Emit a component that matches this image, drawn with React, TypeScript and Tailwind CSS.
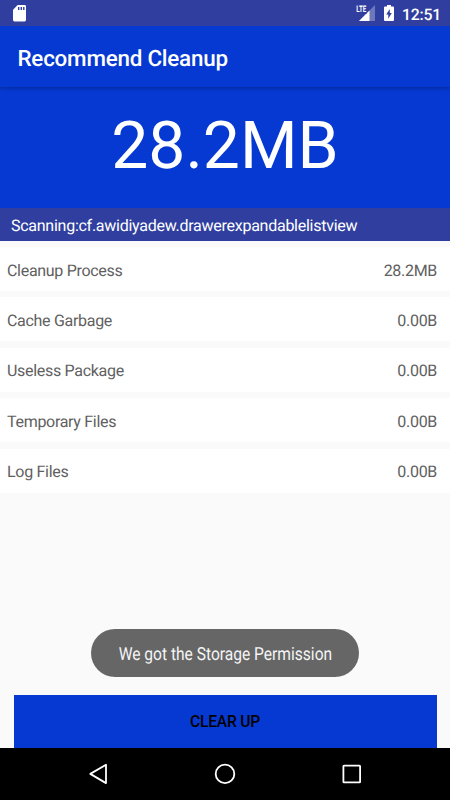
import React from 'react';
import { clsx } from 'clsx';

interface ScanItem {
    label: string;
    size: string;
}

const items: ScanItem[] = [
    { label: 'Cleanup Process', size: '28.2MB' },
    { label: 'Cache Garbage', size: '0.00B' },
    { label: 'Useless Package', size: '0.00B' },
    { label: 'Temporary Files', size: '0.00B' },
    { label: 'Log Files', size: '0.00B' },
];

function StatusBar() {
    return (
        <div className="relative z-20 flex h-[26px] items-center justify-between bg-[#303f9f] pl-[13px] pr-[9px] text-white">
            {/* SD card */}
            <svg width="13" height="17" viewBox="0 0 13 17">
                <path d="M4.7 0H11.6Q13 0 13 1.4V15Q13 16.4 11.6 16.4H1.4Q0 16.4 0 15V4.8Z" fill="white" />
                <path d="M5.7 2V5M8.3 2V5M10.8 2V5" stroke="#303f9f" strokeWidth="1.4" />
            </svg>

            <div className="flex items-center">
                <svg width="20" height="18" viewBox="0 0 20 18">
                    <path d="M19 1V17H3Z" fill="white" fillOpacity="0.3" />
                    <path d="M13.5 6.5V17H3Z" fill="white" />
                    <path d="M0 0H11V9.5H0Z" fill="#303f9f" />
                    <text x="0.3" y="8.2" fontSize="9" fontWeight="700" fontFamily="Roboto, sans-serif" textLength="10" lengthAdjust="spacingAndGlyphs" fill="white">LTE</text>
                </svg>
                <svg className="ml-2" width="10" height="18" viewBox="0 0 10 18">
                    <path d="M3 1H7V2.6H9Q10 2.6 10 3.6V16Q10 17 9 17H1Q0 17 0 16V3.6Q0 2.6 1 2.6H3Z" fill="white" />
                    <path d="M5.8 5L2.2 10.5H4.3V14.7L7.8 9H5.8Z" fill="#303f9f" />
                </svg>
                <span className="ml-2 pt-[3px] text-[15.8px] leading-none font-medium tracking-[-0.2px]">12:51</span>
            </div>
        </div>
    );
}

function AppBar() {
    return (
        <header className="relative z-10 flex h-[61px] items-center bg-[#0639d1] pl-[17.5px] shadow-[0_1px_4px_rgba(0,0,0,0.3)]">
            <h1 className="pt-1.5 text-[22.4px] leading-none font-medium tracking-[-0.22px] text-white">Recommend Cleanup</h1>
        </header>
    );
}

function ScanRow({ label, size, last }: ScanItem & { last: boolean }) {
    return (
        <li className={clsx('flex h-[44px] items-center justify-between bg-white pt-[3px] pl-[7px] pr-[13px]', !last && 'mb-[6.45px]')}>
            <span>{label}</span>
            <span>{size}</span>
        </li>
    );
}

function Toast({ children }: { children: React.ReactNode }) {
    return (
        <div className="absolute top-[629px] left-[91px] flex h-[48px] w-[268px] items-center justify-center rounded-full bg-[#666666] text-[#f5f5f5]">
            <span className="scale-x-[0.865] pt-0.5 text-[18px] whitespace-nowrap">{children}</span>
        </div>
    );
}

function NavigationBar() {
    return (
        <nav className="flex h-[52px] items-center justify-center bg-black">
            <svg className="overflow-visible" width="270" height="24" viewBox="0 0 270 24" fill="none" stroke="white" strokeWidth="1.8" strokeLinejoin="round">
                <path d="M16 2.7V21.1L0.3 11.9Z" />
                <circle cx="135" cy="11.9" r="9.3" />
                <rect x="253.4" y="3.6" width="16.7" height="16.7" rx="0.6" />
            </svg>
        </nav>
    );
}

export default function App() {
    return (
        <div className="relative flex h-[800px] w-[450px] flex-col overflow-hidden bg-[#fafafa] font-['Roboto',sans-serif] [text-rendering:geometricPrecision]">
            <StatusBar />
            <AppBar />

            {/* Total found so far */}
            <div className="flex h-[121px] items-center justify-center bg-[#0639d1] pb-[2px] text-[66px] leading-none text-white">
                28.2MB
            </div>
            <div className="flex h-[33px] items-center bg-[#303f9f] pt-[3px] pl-[11px] text-[16px] tracking-[-0.26px] text-white">
                Scanning:cf.awidiyadew.drawerexpandablelistview
            </div>

            <ul className="mt-1.5 text-[16px] tracking-[-0.3px] text-[#606060]">
                {items.map((item, i) => (
                    <ScanRow key={item.label} {...item} last={i === items.length - 1} />
                ))}
            </ul>

            <button className="mx-[13.5px] mt-auto h-[53px] bg-[#0639d1] pt-0.5 text-[15.6px] font-medium tracking-[-0.2px] text-black">
                CLEAR UP
            </button>
            <NavigationBar />

            <Toast>We got the Storage Permission</Toast>
        </div>
    );
}
